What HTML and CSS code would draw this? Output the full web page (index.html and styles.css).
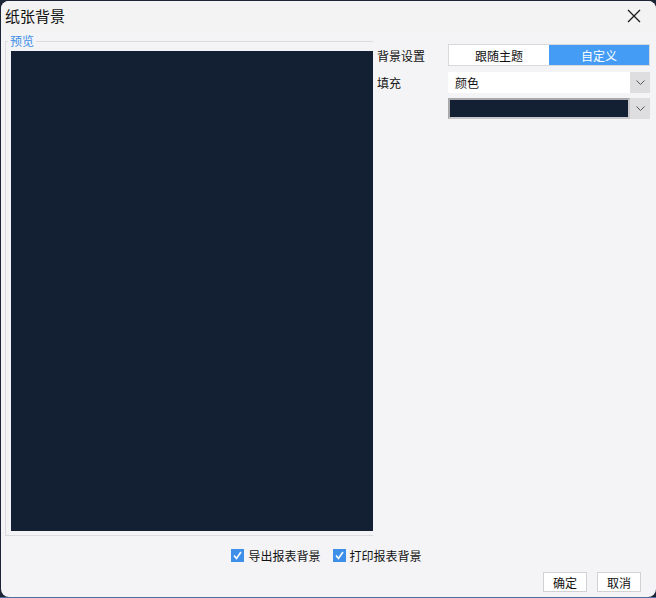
FILE: index.html
```html
<!DOCTYPE html>
<html lang="zh">
<head>
    <meta charset="UTF-8">
    <meta name="viewport" content="width=device-width, initial-scale=1.0">
    <title>纸张背景</title>
    <link rel="stylesheet" href="styles.css">
</head>
<body>
    <div class="window">
        <div class="titlebar">
            <span class="title">纸张背景</span>
            <span class="close">
                <svg width="14" height="14" viewBox="0 0 14 14"><path d="M1 1L13 13M13 1L1 13" stroke="#1a1a1a" stroke-width="1.3" fill="none"/></svg>
            </span>
        </div>
        <div class="main">
            <fieldset class="preview">
                <legend>预览</legend>
                <div class="paper"></div>
            </fieldset>
            <div class="settings">
                <div class="row">
                    <span class="label">背景设置</span>
                    <div class="segment">
                        <span class="seg">跟随主题</span>
                        <span class="seg active">自定义</span>
                    </div>
                </div>
                <div class="row">
                    <span class="label">填充</span>
                    <div class="combo">
                        <span class="field">颜色</span>
                        <span class="drop"><svg width="9" height="5" viewBox="0 0 9 5"><path d="M0.5 0.5L4.5 4.5L8.5 0.5" stroke="#555" stroke-width="1" fill="none"/></svg></span>
                    </div>
                </div>
                <div class="row">
                    <span class="label"></span>
                    <div class="combo">
                        <span class="field swatch"></span>
                        <span class="drop"><svg width="9" height="5" viewBox="0 0 9 5"><path d="M0.5 0.5L4.5 4.5L8.5 0.5" stroke="#555" stroke-width="1" fill="none"/></svg></span>
                    </div>
                </div>
            </div>
        </div>
        <div class="checks">
            <label class="check">
                <span class="box"><svg width="13" height="13" viewBox="0 0 13 13"><path d="M3 6.5L5.5 9.5L10 3" stroke="#fff" stroke-width="1.6" fill="none"/></svg></span>
                导出报表背景
            </label>
            <label class="check">
                <span class="box"><svg width="13" height="13" viewBox="0 0 13 13"><path d="M3 6.5L5.5 9.5L10 3" stroke="#fff" stroke-width="1.6" fill="none"/></svg></span>
                打印报表背景
            </label>
        </div>
        <div class="buttons">
            <button>确定</button>
            <button>取消</button>
        </div>
    </div>
</body>
</html>
```

FILE: styles.css
```css
html, body {
    margin: 0;
    height: 100%;
}
body {
    background: linear-gradient(to bottom, #1c2536 0, #1c2536 597px, #4f6c9e 597px);
    font-family: "Noto Sans CJK SC", "Noto Sans", sans-serif;
    font-size: 12px;
    color: #111;
    overflow: hidden;
}
.window {
    margin: 1px 0 0 1px;
    height: 596px;
    background: #f4f4f6;
    border-radius: 8px;
    display: flex;
    flex-direction: column;
    overflow: hidden;
}
.titlebar {
    height: 32px;
    flex: none;
    display: flex;
    align-items: center;
    justify-content: space-between;
    padding: 0 15px 0 4px;
    background: #f3f3f3;
}
.title {
    font-size: 15px;
    line-height: 20px;
    margin-top: -2px;
}
.close {
    display: flex;
    margin-top: -2px;
}
.main {
    display: flex;
    height: 503px;
    padding-left: 4px;
}
.preview {
    margin: 1px 0 0 0;
    width: 362px;
    padding: 3px 0 4px 5px;
    border: 1px solid #dcdcdf;
    border-right: none;
    display: flex;
}
.preview legend {
    color: #3a8ee6;
    font-size: 12px;
    line-height: 14px;
    padding: 0 2px;
    margin-left: -3px;
}
.paper {
    flex: 1;
    background: #131f33;
}
.settings {
    margin-left: 4px;
    padding-top: 11px;
    display: flex;
    flex-direction: column;
    gap: 5px;
}
.row {
    display: flex;
    align-items: center;
}
.row:first-child {
    margin-bottom: 1px;
}
.label {
    width: 71px;
    flex: none;
}
.segment {
    display: flex;
    width: 200px;
    height: 20px;
    border: 1px solid #d9d9dc;
    background: #fff;
}
.seg {
    flex: 1;
    display: flex;
    align-items: center;
    justify-content: center;
    font-size: 12px;
}
.seg.active {
    background: #459cf5;
    color: #fff;
}
.combo {
    display: flex;
    width: 202px;
    height: 21px;
}
.field {
    flex: 1;
    background: #fff;
    display: flex;
    align-items: center;
    padding-left: 7px;
}
.field.swatch {
    padding: 0;
    border: 2px solid #c8c8ca;
    border-top-color: #a9a9ab;
    border-left-color: #a9a9ab;
    background: #131f33;
}
.drop {
    width: 20px;
    flex: none;
    background: #dedee0;
    display: flex;
    align-items: center;
    justify-content: center;
}
.checks {
    display: flex;
    justify-content: center;
    gap: 12px;
    margin-top: 10px;
    height: 18px;
    padding-right: 4px;
}
.check {
    display: flex;
    align-items: center;
    gap: 4px;
    font-size: 12px;
}
.box {
    width: 13px;
    height: 13px;
    background: #3d8fea;
    display: flex;
}
.buttons {
    display: flex;
    justify-content: flex-end;
    gap: 10px;
    margin-top: 8px;
    padding-right: 15px;
}
button {
    width: 44px;
    height: 20px;
    padding: 0;
    background: #fff;
    border: 1px solid #d2d2d4;
    font-family: "Noto Sans CJK SC", "Noto Sans", sans-serif;
    font-size: 12px;
    color: #111;
}
```
